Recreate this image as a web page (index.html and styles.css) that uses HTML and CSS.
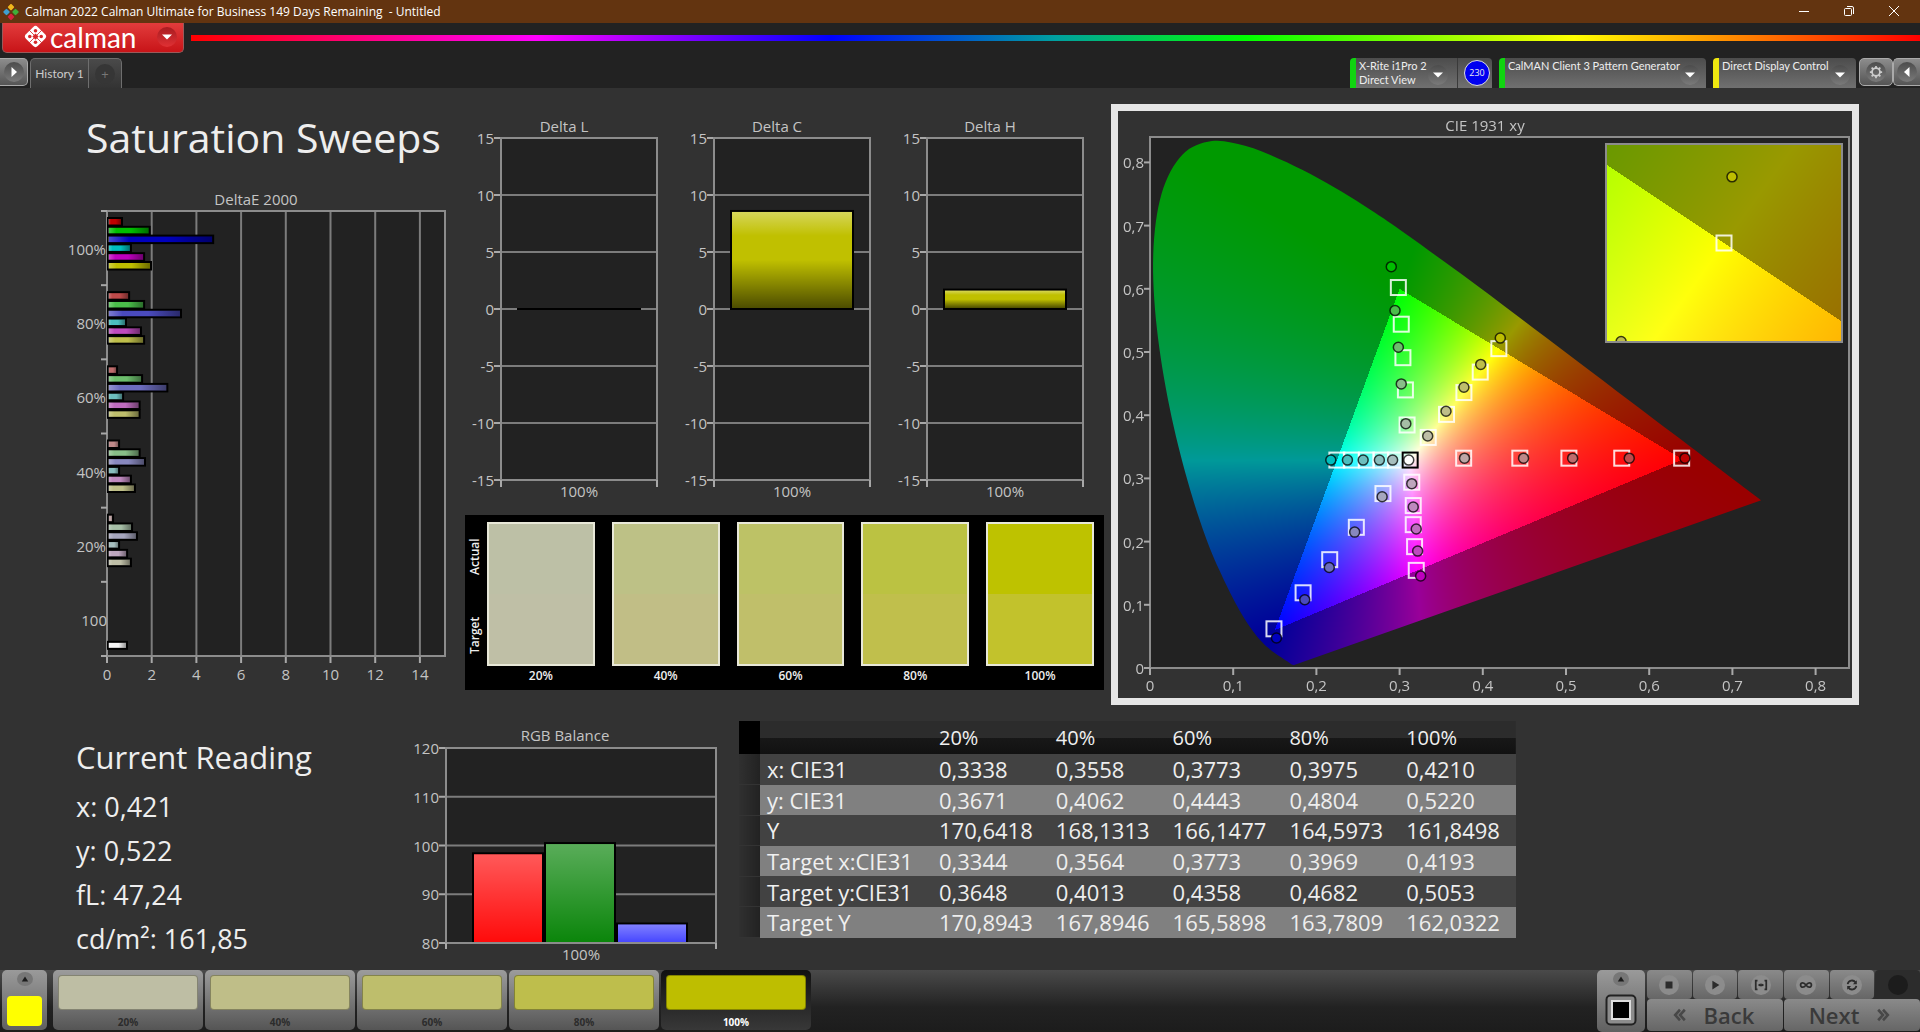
FILE: index.html
```html
<!DOCTYPE html>
<html lang="en">
<head>
  <meta charset="UTF-8" />
  <meta name="viewport" content="width=device-width, initial-scale=1.0" />
  <title>Calman - Saturation Sweeps</title>
  <link rel="stylesheet" href="styles.css">
</head>
<body>
  <!-- Window title -->
  <header class="titlebar">
    <svg class="app-icon" viewBox="0 0 16 16">
      <rect x="5.5" y="0.6" width="5" height="5" rx="1" transform="rotate(45 8 3.1)" fill="#f2b81c"/>
      <rect x="1" y="5.5" width="5" height="5" rx="1" transform="rotate(45 3.5 8)" fill="#3f9fd0"/>
      <rect x="10" y="5.5" width="5" height="5" rx="1" transform="rotate(45 12.5 8)" fill="#3fae3a"/>
      <rect x="5.5" y="10.4" width="5" height="5" rx="1" transform="rotate(45 8 12.9)" fill="#d8203f"/>
    </svg>
    <span class="window-title">Calman 2022 Calman Ultimate for Business 149 Days Remaining&nbsp; - Untitled</span>
    <div class="window-buttons">
      <button aria-label="Minimize"><svg viewBox="0 0 12 12"><path d="M1 6.5h10"/></svg></button>
      <button aria-label="Restore"><svg viewBox="0 0 12 12"><rect x="1.5" y="3.5" width="7" height="7" rx="1"/><path d="M4 1.5h5a1.500 1.500 0 0 1 1.500 1.500v6"/></svg></button>
      <button aria-label="Close"><svg viewBox="0 0 12 12"><path d="M1 1l10 10M11 1L1 11"/></svg></button>
    </div>
  </header>

  <!-- Logo menu and spectrum -->
  <div class="brandbar">
    <button class="brand">
      <svg class="brand-logo" viewBox="0 0 24 24">
        <rect x="4" y="4" width="16" height="16" rx="3" transform="rotate(45 12 12)" fill="#fff"/>
        <g fill="#d8282a">
          <circle cx="12" cy="6.500" r="1.700"/><circle cx="6.500" cy="12" r="1.700"/><circle cx="17.500" cy="12" r="1.700"/><circle cx="12" cy="17.500" r="1.700"/>
          <path d="M12 9l3 3-3 3-3-3z"/>
        </g>
        <g stroke="#d8282a" stroke-width="0.8"><path d="M6 6l12 12M18 6L6 18"/></g>
      </svg>
      <span class="brand-name">calman</span>
      <span class="knob red"><svg viewBox="0 0 10 10"><path d="M0 2.500h10L5 7.500z"/></svg></span>
    </button>
    <div class="spectrum"></div>
  </div>

  <!-- Tabs and devices -->
  <div class="tabbar">
    <button class="square-btn first" aria-label="Expand"><span class="knob"><svg viewBox="0 0 10 10"><path d="M2.500 0v10L8 5z"/></svg></span></button>
    <div class="tabs">
      <button class="tab">History 1</button>
      <button class="tab-add" aria-label="Add tab"><span class="plus">+</span></button>
    </div>
    <div class="devices">
      <div class="device meter">
        <button class="device-main"><span>X-Rite i1Pro 2<br>Direct View</span><span class="knob"><svg viewBox="0 0 10 10"><path d="M0 2.500h10L5 7.500z"/></svg></span></button>
        <div class="device-badge"><span>230</span></div>
      </div>
      <div class="device generator">
        <button class="device-main"><span>CalMAN Client 3 Pattern Generator</span><span class="knob"><svg viewBox="0 0 10 10"><path d="M0 2.500h10L5 7.500z"/></svg></span></button>
      </div>
      <div class="device display">
        <button class="device-main"><span>Direct Display Control</span><span class="knob"><svg viewBox="0 0 10 10"><path d="M0 2.500h10L5 7.500z"/></svg></span></button>
      </div>
      <div class="device-tools">
        <button class="square-btn" aria-label="Settings"><span class="knob"><svg class="gear" viewBox="0 0 16 16"><circle cx="8" cy="8" r="4.500"/><path d="M8 1v2.500M8 12.500V15M1 8h2.500M12.500 8H15M3 3l1.800 1.800M11.200 11.200L13 13M13 3l-1.800 1.800M4.800 11.200L3 13"/></svg></span></button>
        <button class="square-btn last" aria-label="Collapse"><span class="knob"><svg viewBox="0 0 10 10"><path d="M7.500 0v10L2 5z"/></svg></span></button>
      </div>
    </div>
  </div>

  <main>
    <section class="charts">
      <div class="sweeps">
        <h1>Saturation Sweeps</h1>
        <svg id="deltae" class="chart" viewBox="0 0 404 502"></svg>
      </div>

      <div class="middle">
        <div class="deltas">
          <svg id="delta-l" class="chart" viewBox="0 0 213 406"></svg>
          <svg id="delta-c" class="chart" viewBox="0 0 213 406"></svg>
          <svg id="delta-h" class="chart" viewBox="0 0 213 406"></svg>
        </div>
        <div class="compare">
          <div class="compare-side"><span>Actual</span><span>Target</span></div>
          <div class="compare-list" id="compare"></div>
        </div>
      </div>

      <div class="cie">
        <canvas id="cie-field" width="734" height="587"></canvas>
        <svg id="cie" class="chart" viewBox="0 0 734 587"></svg>
      </div>
    </section>

    <section class="readings">
      <div class="current">
        <h2>Current Reading</h2>
        <p>x: 0,421</p>
        <p>y: 0,522</p>
        <p>fL: 47,24</p>
        <p>cd/m²: 161,85</p>
      </div>
      <svg id="rgb" class="chart" viewBox="0 0 334 244"></svg>
      <table class="data">
        <colgroup><col class="col-mark"><col class="col-name"><col><col><col><col><col></colgroup>
        <thead>
          <tr><td></td><td></td><th>20%</th><th>40%</th><th>60%</th><th>80%</th><th>100%</th></tr>
        </thead>
        <tbody>
          <tr><td></td><th>x: CIE31</th><td>0,3338</td><td>0,3558</td><td>0,3773</td><td>0,3975</td><td>0,4210</td></tr>
          <tr><td></td><th>y: CIE31</th><td>0,3671</td><td>0,4062</td><td>0,4443</td><td>0,4804</td><td>0,5220</td></tr>
          <tr><td></td><th>Y</th><td>170,6418</td><td>168,1313</td><td>166,1477</td><td>164,5973</td><td>161,8498</td></tr>
          <tr><td></td><th>Target x:CIE31</th><td>0,3344</td><td>0,3564</td><td>0,3773</td><td>0,3969</td><td>0,4193</td></tr>
          <tr><td></td><th>Target y:CIE31</th><td>0,3648</td><td>0,4013</td><td>0,4358</td><td>0,4682</td><td>0,5053</td></tr>
          <tr><td></td><th>Target Y</th><td>170,8943</td><td>167,8946</td><td>165,5898</td><td>163,7809</td><td>162,0322</td></tr>
        </tbody>
      </table>
    </section>
  </main>

  <!-- Pattern bar -->
  <footer class="bottombar">
    <button class="current-color" aria-label="Pattern color">
      <span class="mini-knob"><svg viewBox="0 0 10 10"><path d="M1 8h8L5 2z"/></svg></span>
      <span class="color-box"></span>
    </button>
    <div class="patterns" id="patterns"></div>
    <div class="transport">
      <button class="stop-panel" aria-label="Window">
        <span class="mini-knob"><svg viewBox="0 0 10 10"><path d="M1 8h8L5 2z"/></svg></span>
        <svg class="stop-box" viewBox="0 0 32 32"><rect x="1.500" y="1.500" width="29" height="29" rx="4" fill="#8c8c8c" stroke="#222" stroke-width="2"/><rect x="7" y="7" width="18" height="18" fill="#000" stroke="#ddd" stroke-width="2"/><rect x="10" y="10" width="12" height="12" fill="#000"/></svg>
      </button>
      <div class="transport-grid">
        <div class="transport-row">
          <button aria-label="Stop"><span class="round"><svg viewBox="0 0 16 16"><rect x="4" y="4" width="8" height="8"/></svg></span></button>
          <button aria-label="Play"><span class="round"><svg viewBox="0 0 16 16"><path d="M5 3l8 5-8 5z"/></svg></span></button>
          <button aria-label="Read series"><span class="round"><svg viewBox="0 0 16 16"><path class="line" d="M4 3H2v10h2M12 3h2v10h-2M5.500 8h5"/><path d="M4.500 8l3-2v4zM11.500 8l-3-2v4z"/></svg></span></button>
          <button aria-label="Read continuous"><span class="round"><svg viewBox="0 0 16 16"><path class="line" d="M8 8C6.500 6 5.500 5.500 4.300 5.500a2.500 2.500 0 0 0 0 5C5.500 10.500 6.500 10 8 8s2.500-2.500 3.700-2.500a2.500 2.500 0 0 1 0 5C10.500 10.500 9.500 10 8 8z"/></svg></span></button>
          <button aria-label="Refresh"><span class="round"><svg viewBox="0 0 16 16"><path class="line" d="M3 7a5 5 0 0 1 9-2M13 9a5 5 0 0 1-9 2"/><path d="M13.500 2.500v4.500H9zM2.500 13.500V9H7z"/></svg></span></button>
          <button class="dark" aria-label="Record"><span class="round"></span></button>
        </div>
        <div class="transport-row">
          <button class="nav"><svg viewBox="0 0 16 16"><path d="M8 2L2.500 8 8 14M13.500 2L8 8l5.500 6"/></svg>Back</button>
          <button class="nav">Next<svg viewBox="0 0 16 16"><path d="M8 2l5.500 6L8 14M2.500 2L8 8l-5.500 6"/></svg></button>
        </div>
      </div>
    </div>
  </footer>

  <script src="charts.js"></script>
</body>
</html>
```
FILE: styles.css
```css
* {
  box-sizing: border-box;
}
body {
  margin: 0;
  min-height: 100vh;
  display: flex;
  flex-direction: column;
  background: #323232;
  color: #eee;
  font-family: "Open Sans", "Noto Sans", sans-serif;
  font-size: 15px;
}
button {
  border: 0;
  padding: 0;
  background: none;
  color: inherit;
  font-family: inherit;
}

/* Title bar */
.titlebar {
  display: flex;
  align-items: center;
  height: 23px;
  padding: 0 4px 0 3px;
  background: #633410;
  font-size: 12px;
}
.app-icon {
  width: 16px;
  height: 16px;
  margin-right: 6px;
}
.window-title {
  flex: 1;
  color: #fff;
}
.window-buttons {
  display: flex;
}
.window-buttons button {
  width: 45px;
  height: 22px;
}
.window-buttons svg {
  width: 12px;
  height: 12px;
  fill: none;
  stroke: #fff;
}

/* Logo and spectrum */
.brandbar {
  display: flex;
  align-items: flex-start;
  height: 35px;
  padding-left: 2px;
  background: #222;
}
.brand {
  display: flex;
  align-items: center;
  width: 182px;
  height: 30px;
  padding: 0 6px 2px 20px;
  border: 1px solid #9a5a5a;
  border-top: 0;
  border-radius: 0 0 5px 5px;
  background: linear-gradient(#e23c3c, #c81418);
  color: #fff;
}
.brand-logo {
  width: 25px;
  height: 25px;
}
.brand-name {
  flex: 1;
  margin-left: 2px;
  font-family: Lato, sans-serif;
  font-size: 28px;
  line-height: 24px;
  text-align: left;
}
.spectrum {
  flex: 1;
  height: 6px;
  margin: 12px 0 0 7px;
  background: linear-gradient(to right, #f00, #f0f 20%, #00f 37%, #00a0a0 50%, #0f0 61%, #ff0 80%, #f00);
}
.knob {
  display: flex;
  align-items: center;
  justify-content: center;
  width: 20px;
  height: 20px;
  border-radius: 50%;
  background: linear-gradient(#4c4c4c, #7a7a7a);
}
.knob.red {
  background: linear-gradient(#a81c20, #e03034);
}
.knob svg {
  width: 10px;
  height: 10px;
  fill: #fff;
}
.knob .gear {
  width: 14px;
  height: 14px;
  fill: none;
  stroke: #ccc;
  stroke-width: 2;
}

/* Tabs and devices */
.tabbar {
  display: flex;
  height: 30px;
  background: #222;
}
.square-btn {
  display: flex;
  align-items: center;
  justify-content: center;
  width: 34px;
  height: 28px;
  border: 1px solid #aaa;
  border-radius: 5px;
  background: linear-gradient(#8c8c8c, #555);
}
.square-btn.first {
  width: 28px;
  border-left: 0;
  border-radius: 0 5px 5px 0;
}
.square-btn.last {
  width: 27px;
  border-right: 0;
  border-radius: 5px 0 0 5px;
}
.tabs {
  display: flex;
  margin-left: 2px;
  border: 1px solid #6e6e6e;
  border-bottom: 0;
  border-radius: 5px 5px 0 0;
  background: linear-gradient(#4a4a4a, #333);
}
.tab {
  width: 58px;
  border-right: 1px solid #6e6e6e;
  color: #ccc;
  font-size: 12px;
  font-family: Lato, sans-serif;
}
.tab-add {
  display: flex;
  align-items: center;
  justify-content: center;
  width: 32px;
}
.plus {
  width: 20px;
  height: 20px;
  border-radius: 50%;
  background: #363636;
  color: #777;
  font-size: 13px;
  line-height: 20px;
}
.devices {
  display: flex;
  gap: 7px;
  margin-left: auto;
}
.device {
  display: flex;
  border-left: 6px solid #10d410;
  border-radius: 4px 4px 0 0;
  background: linear-gradient(#4c4c4c, #707070);
}
.device.display {
  border-left-color: #f0e810;
}
.device-main {
  display: flex;
  flex: 1;
  align-items: flex-start;
  justify-content: space-between;
  padding: 1px 6px 0 3px;
  font-family: Lato, sans-serif;
  font-size: 11px;
  line-height: 14px;
  text-align: left;
}
.device-main .knob {
  margin-top: 6px;
}
.meter {
  width: 142px;
}
.meter .device-main {
  padding-right: 9px;
}
.generator {
  width: 207px;
}
.display {
  width: 143px;
}
.device-badge {
  width: 35px;
  padding: 2px 0 0 6px;
  border-left: 1px solid #3a3a3a;
}
.device-badge span {
  display: block;
  width: 26px;
  height: 26px;
  border: 1px solid #ddd;
  border-radius: 50%;
  background: #0000f0;
  font-size: 9px;
  line-height: 24px;
  text-align: center;
}
.device-tools {
  display: flex;
  margin-left: -4px;
}

/* Charts */
main {
  flex: 1;
  padding: 16px 61px 0;
}
.charts {
  display: grid;
  grid-template-columns: 404fr 639fr 755fr;
  align-items: start;
}
.chart {
  display: block;
  width: 100%;
  height: auto;
}
.chart text {
  fill: #c4c4c4;
  font-size: 15px;
}
.chart .end {
  text-anchor: end;
}
.chart .mid {
  text-anchor: middle;
}
.chart .plot {
  fill: #222;
}
.chart .frame {
  fill: none;
  stroke: #8c8c8c;
  stroke-width: 2;
}
.chart .grid {
  stroke: #7c7c7c;
  stroke-width: 2;
}
.chart .tick {
  stroke: #a8a8a8;
  stroke-width: 2;
}
.chart .bar {
  stroke: #000;
  stroke-width: 2;
}
.sweeps h1 {
  margin: 0 0 16px 25px;
  font-size: 41px;
  font-weight: 400;
  line-height: 66px;
}
.deltas {
  display: grid;
  grid-template-columns: 1fr 1fr 1fr;
}
.compare {
  display: flex;
  margin-top: 5px;
  padding: 7px 10px 4px 0;
  background: #000;
}
.compare-side {
  display: flex;
  flex-direction: column;
  gap: 8px;
  width: 22px;
  height: 148px;
}
.compare-side span {
  flex: 1;
  font-size: 12px;
  font-weight: 600;
  line-height: 20px;
  text-align: center;
  writing-mode: vertical-rl;
  transform: rotate(180deg);
}
.compare-list {
  display: flex;
  flex: 1;
  gap: 17px;
}
.compare-item {
  flex: 1;
  font-size: 12px;
  font-weight: 600;
  line-height: 20px;
  text-align: center;
}
.compare-swatch {
  height: 144px;
  border: 2px solid #e8e8d8;
}
.compare-half {
  height: 50%;
}
.cie {
  display: grid;
  margin-left: 7px;
  border: 7px solid #e6e6e6;
}
.cie > * {
  grid-area: 1 / 1;
  width: 100%;
}
.cie circle {
  stroke: #000;
  stroke-opacity: 0.75;
  stroke-width: 1.5;
}
.cie .target {
  fill: none;
  stroke: #fff;
  stroke-opacity: 0.85;
  stroke-width: 2;
}
.cie .white {
  stroke: #000;
  stroke-opacity: 1;
}

/* Readings */
.readings {
  display: grid;
  grid-template-columns: 344fr 334fr 777fr 343fr;
  align-items: start;
  margin-top: 16px;
}
.current {
  padding: 12px 0 0 15px;
}
.current h2 {
  margin: 0 0 4px;
  font-size: 31px;
  font-weight: 400;
  line-height: 48px;
}
.current p {
  margin: 0;
  font-size: 27px;
  line-height: 44px;
}
.data {
  width: 100%;
  height: 217px;
  border-collapse: collapse;
  table-layout: fixed;
  font-size: 22px;
  line-height: 28px;
}
.col-mark {
  width: 21px;
}
.col-name {
  width: 172px;
}
.data td,
.data th {
  padding: 0 0 0 7px;
  font-weight: 400;
  text-align: left;
  white-space: nowrap;
}
.data th {
  color: #f0f0f0;
}
.data thead tr {
  height: 33px;
  background: linear-gradient(#2c2c2c 50%, #181818 51%, #111);
  font-size: 20px;
}
.data tbody tr {
  background: #424242;
}
.data tbody tr:nth-child(even) {
  background: #808080;
}
.data thead td:first-child {
  background: #000;
}
.data tbody td:first-child {
  border-bottom: 1px solid #333;
  background: linear-gradient(to right, #303030, #222);
}

/* Bottom bar */
.bottombar {
  display: flex;
  height: 62px;
  padding-left: 2px;
  background: linear-gradient(#4a4a4a, #222 60%, #1c1c1c);
}
.current-color {
  display: flex;
  flex-direction: column;
  align-items: center;
  justify-content: space-between;
  width: 45px;
  height: 60px;
  padding: 2px 0 4px;
  border-radius: 5px;
  background: linear-gradient(#9a9a9a, #606060);
}
.mini-knob {
  display: flex;
  align-items: center;
  justify-content: center;
  width: 16px;
  height: 14px;
  border-radius: 50%;
  background: #777;
}
.mini-knob svg {
  width: 10px;
  height: 8px;
  fill: #1c1c1c;
}
.color-box {
  width: 35px;
  height: 30px;
  border-radius: 4px;
  background: #ff0;
}
.patterns {
  display: flex;
  gap: 2px;
  margin-left: 6px;
}
.pattern {
  display: flex;
  flex-direction: column;
  width: 150px;
  height: 60px;
  padding: 5px 5px 0;
  border-radius: 5px;
  background: linear-gradient(#9c9c9c, #555);
  color: #2c2c2c;
  font-size: 10px;
  font-weight: 700;
  line-height: 16px;
  text-align: center;
}
.pattern-swatch {
  height: 36px;
  margin-bottom: 4px;
  border: 1px solid rgba(0, 0, 0, 0.3);
  border-radius: 4px;
}
.pattern.selected {
  background: linear-gradient(#111, #383838);
  color: #fff;
}
.transport {
  display: flex;
  gap: 2px;
  margin-left: auto;
}
.stop-panel {
  display: flex;
  flex-direction: column;
  align-items: center;
  width: 48px;
  padding-top: 2px;
  border-radius: 5px;
  background: linear-gradient(#9a9a9a, #606060);
}
.stop-box {
  width: 32px;
  height: 32px;
  margin-top: 8px;
}
.transport-grid {
  width: 273px;
}
.transport-row {
  display: flex;
  gap: 1px;
}
.transport-row button {
  display: flex;
  flex: 1;
  align-items: center;
  justify-content: center;
  height: 29px;
  border-radius: 4px;
  background: linear-gradient(#8a8a8a, #666);
}
.transport-row .dark {
  background: #2c2c2c;
}
.round {
  width: 20px;
  height: 20px;
  border-radius: 50%;
  background: #8c8c8c;
}
.dark .round {
  background: #1c1c1c;
}
.round svg {
  display: block;
  width: 14px;
  height: 14px;
  margin: 3px;
  fill: #2c2c2c;
}
.round .line {
  fill: none;
  stroke: #2c2c2c;
  stroke-width: 2;
}
.transport-row .nav {
  gap: 16px;
  height: 32px;
  padding-right: 4px;
  color: #3a3a3a;
  font-size: 22px;
  font-weight: 600;
}
.nav svg {
  width: 16px;
  height: 14px;
  fill: none;
  stroke: #484848;
  stroke-width: 3;
}
```
FILE: charts.js
```js
var LEVELS = ['20%', '40%', '60%', '80%', '100%'];

// Low channel for each saturation level at 75% luminance
var LOW = [166, 136, 108, 74, 0];
var HIGH = 190;

function hueColor(hue, level) {
  var mask = { r: '100', g: '010', b: '001', c: '011', m: '101', y: '110' }[hue];
  return 'rgb(' + mask.split('').map(function(bit) {
    return bit === '1' ? HIGH : LOW[level];
  }).join(',') + ')';
}

// SVG helpers
function el(name, attrs, text) {
  var out = '<' + name;
  for (var key in attrs) out += ' ' + key + '="' + attrs[key] + '"';
  return out + '>' + (text === undefined ? '' : text) + '</' + name + '>';
}
function line(cls, x1, y1, x2, y2) {
  return el('line', { 'class': cls, x1: x1, y1: y1, x2: x2, y2: y2 });
}
function rect(cls, x, y, w, h, fill) {
  var attrs = { 'class': cls, x: x, y: y, width: w, height: h };
  if (fill) attrs.fill = fill;
  return el('rect', attrs);
}
function label(cls, x, y, text) {
  return el('text', { 'class': cls, x: x, y: y }, text);
}
function gradient(id, horizontal, stops) {
  return el('linearGradient', { id: id, x1: 0, y1: 0, x2: horizontal ? 1 : 0, y2: horizontal ? 0 : 1 },
    stops.map(function(s) {
      return el('stop', { offset: s[0], 'stop-color': s[1], 'stop-opacity': s[2] });
    }).join(''));
}
function put(id, html) {
  document.getElementById(id).innerHTML = html;
}

// DeltaE 2000, one group of six bars per level
function drawDeltaE() {
  var values = [
    [0.27, 1.12, 1.34, 0.54, 0.90, 1.07],
    [0.54, 1.46, 1.70, 0.54, 1.07, 1.25],
    [0.45, 1.57, 2.70, 0.72, 1.46, 1.46],
    [0.99, 1.66, 3.31, 0.85, 1.52, 1.66],
    [0.67, 1.91, 4.75, 1.07, 1.66, 1.97]
  ];
  var left = 46, top = 25, width = 338, height = 445, unit = 22.35, step = height / 6;
  var s = gradient('shade-h', true, [[0, '#fff', 0.3], [0.2, '#fff', 0], [0.55, '#000', 0], [1, '#000', 0.45]]);
  s += label('mid', 195, 19, 'DeltaE 2000');
  s += rect('plot', left, top, width, height);
  for (var v = 0; v <= 14; v += 2) {
    var x = left + v * unit;
    if (v) s += line('grid', x, top, x, top + height);
    s += line('tick', x, top + height, x, top + height + 7);
    s += label('mid', x, top + height + 24, v);
  }
  s += rect('frame', left, top, width, height);
  for (var i = 0; i <= 6; i++) s += line('tick', left - 6, top + i * step, left, top + i * step);
  for (var g = 0; g < 5; g++) {
    var y = top + g * step;
    var level = 4 - g;
    s += label('end', left - 1, y + step / 2 + 7, LEVELS[level]);
    'rgbcmy'.split('').forEach(function(hue, n) {
      var w = values[level][n] * unit - 1;
      s += rect('bar', left + 1, y + 7 + n * 8.8, w, 7.5, hueColor(hue, level));
      s += rect('', left + 1, y + 8 + n * 8.8, w, 5.5, 'url(#shade-h)');
    });
  }
  s += label('end', left, top + 5.5 * step + 7, '100');
  s += rect('bar', left + 1, top + 5 * step + 60, 19, 7, '#f4f4f4');
  s += rect('', left + 1, top + 5 * step + 61, 19, 5, 'url(#shade-h)');
  put('deltae', s);
}

// Delta L / C / H, range -15..15
function drawDelta(id, title, value) {
  var left = 36, top = 34, width = 156, height = 342, unit = height / 30, zero = top + height / 2;
  var s = gradient('shade-' + id, false, [[0, '#fff', 0.35], [0.25, '#fff', 0], [0.5, '#000', 0], [1, '#000', 0.6]]);
  s += label('mid', 99, 28, title);
  s += rect('plot', left, top, width, height);
  for (var v = -15; v <= 15; v += 5) {
    var y = zero - v * unit;
    s += line('grid', left, y, left + width, y);
    s += line('tick', left - 7, y, left, y);
    s += label('end', left - 7, y + 6, v);
  }
  s += rect('frame', left, top, width, height);
  s += line('tick', left, top + height, left, top + height + 7);
  s += line('tick', left + width, top + height, left + width, top + height + 7);
  if (value) {
    s += rect('bar', left + 17, zero - value * unit, 122, value * unit, '#c0c000');
    s += rect('', left + 18, zero - value * unit + 1, 120, value * unit - 2, 'url(#shade-' + id + ')');
  } else {
    s += line('bar', left + 16, zero, left + 140, zero);
  }
  s += label('mid', left + 78, top + height + 17, '100%');
  put(id, s);
}

// RGB balance, range 80..120
function drawRgb() {
  var left = 41, top = 27, width = 270, height = 195, unit = height / 40;
  var bars = [['#f00', 98.4], ['#008000', 100.5], ['#3c3cff', 84]];
  var s = gradient('shade-rgb', false, [[0, '#fff', 0.35], [1, '#fff', 0.04]]);
  s += label('mid', 160, 20, 'RGB Balance');
  s += rect('plot', left, top, width, height);
  for (var v = 80; v <= 120; v += 10) {
    var y = top + (120 - v) * unit;
    s += line('grid', left, y, left + width, y);
    s += line('tick', left - 7, y, left, y);
    s += label('end', left - 7, y + 6, v);
  }
  bars.forEach(function(bar, n) {
    var h = (bar[1] - 80) * unit;
    s += rect('bar', left + 27 + n * 72, top + height - h, 70, h, bar[0]);
    s += rect('', left + 28 + n * 72, top + height - h + 1, 68, h - 1, 'url(#shade-rgb)');
  });
  s += rect('frame', left, top, width, height);
  s += line('tick', left, top + height, left, top + height + 6);
  s += line('tick', left + width, top + height, left + width, top + height + 6);
  s += label('mid', left + 135, top + height + 17, '100%');
  put('rgb', s);
}

// Spectral locus of the CIE 1931 observer
var LOCUS = [
  [0.1741, 0.0050], [0.1733, 0.0048], [0.1714, 0.0051], [0.1689, 0.0069], [0.1644, 0.0109],
  [0.1566, 0.0177], [0.1440, 0.0297], [0.1355, 0.0399], [0.1241, 0.0578], [0.1096, 0.0868],
  [0.0913, 0.1327], [0.0687, 0.2007], [0.0454, 0.2950], [0.0235, 0.4127], [0.0082, 0.5384],
  [0.0039, 0.6548], [0.0139, 0.7502], [0.0389, 0.8120], [0.0743, 0.8338], [0.1142, 0.8262],
  [0.1547, 0.8059], [0.1929, 0.7816], [0.2296, 0.7543], [0.2658, 0.7243], [0.3016, 0.6923],
  [0.3731, 0.6245], [0.4441, 0.5547], [0.5125, 0.4866], [0.5752, 0.4242], [0.6270, 0.3725],
  [0.6658, 0.3340], [0.6915, 0.3083], [0.7190, 0.2809], [0.7347, 0.2653]
];

var PLOT = { left: 32, top: 26, right: 731, bottom: 557, ux: 832, uy: 632 };
var INSET = { left: 488, top: 33, width: 236, height: 198, cx: 0.4193, cy: 0.5053, span: 0.05 };

// Pairs of [target, actual] in xy
var POINTS = {
  r: [[[.377, .332], [.378, .332]], [[.4445, .332], [.449, .332]], [[.5035, .332], [.508, .332]], [[.567, .332], [.576, .332]], [[.639, .332], [.643, .332]]],
  g: [[[.309, .3845], [.3075, .3866]], [[.307, .44], [.302, .4495]], [[.304, .491], [.2985, .5075]], [[.302, .544], [.2945, .5655]], [[.2985, .602], [.29, .635]]],
  b: [[[.28, .276], [.279, .271]], [[.248, .2226], [.246, .215]], [[.216, .1714], [.2155, .159]], [[.184, .119], [.186, .108]], [[.149, .062], [.152, .0475]]],
  c: [[[.295, .329], [.2916, .329]], [[.2775, .329], [.2757, .329]], [[.26, .329], [.2562, .329]], [[.242, .329], [.2373, .329]], [[.2246, .329], [.2173, .329]]],
  m: [[[.3146, .294], [.3146, .2917]], [[.3164, .257], [.3164, .2547]], [[.3164, .2268], [.32, .22]], [[.318, .192], [.3217, .185]], [[.32, .1545], [.3253, .1456]]],
  y: [[[.3344, .3648], [.3338, .3671]], [[.3564, .4013], [.3558, .4062]], [[.3773, .4358], [.3773, .4443]], [[.3969, .4682], [.3975, .4804]], [[.4193, .5053], [.421, .522]]]
};

// Full brightness inside the Rec.709 triangle, 60% outside
function xyColor(x, y) {
  var X = x / y, Z = (1 - x - y) / y;
  var rgb = [
    3.2406 * X - 1.5372 - 0.4986 * Z,
    -0.9689 * X + 1.8758 + 0.0415 * Z,
    0.0557 * X - 0.2040 + 1.0570 * Z
  ];
  var inside = Math.min(rgb[0], rgb[1], rgb[2]) >= 0;
  var max = Math.max(rgb[0], rgb[1], rgb[2]);
  return rgb.map(function(c) {
    return Math.max(c, 0) / max * (inside ? 255 : 153);
  });
}

// Fill a rectangle with color, toXY maps a pixel to chromaticity
function colorField(w, h, toXY) {
  var off = document.createElement('canvas');
  off.width = w;
  off.height = h;
  var ctx = off.getContext('2d');
  var img = ctx.createImageData(w, h);
  for (var j = 0; j < h; j++) {
    for (var i = 0; i < w; i++) {
      var p = toXY(i + 0.5, j + 0.5);
      var c = xyColor(p[0], Math.max(p[1], 0.0001));
      var o = (j * w + i) * 4;
      img.data[o] = c[0];
      img.data[o + 1] = c[1];
      img.data[o + 2] = c[2];
      img.data[o + 3] = 255;
    }
  }
  ctx.putImageData(img, 0, 0);
  return off;
}

function plotX(x) { return PLOT.left + x * PLOT.ux; }
function plotY(y) { return PLOT.bottom - y * PLOT.uy; }
function insetX(x) { return INSET.left + ((x - INSET.cx) / INSET.span + 0.5) * INSET.width; }
function insetY(y) { return INSET.top + (0.5 - (y - INSET.cy) / INSET.span) * INSET.height; }

function drawField() {
  var canvas = document.getElementById('cie-field');
  var ctx = canvas.getContext('2d');
  ctx.fillStyle = '#222';
  ctx.fillRect(PLOT.left, PLOT.top, PLOT.right - PLOT.left, PLOT.bottom - PLOT.top);

  ctx.save();
  ctx.beginPath();
  ctx.moveTo(plotX(LOCUS[0][0]), plotY(LOCUS[0][1]));
  for (var i = 0; i < LOCUS.length - 1; i++) {
    var p0 = LOCUS[Math.max(i - 1, 0)], p1 = LOCUS[i], p2 = LOCUS[i + 1];
    var p3 = LOCUS[Math.min(i + 2, LOCUS.length - 1)];
    ctx.bezierCurveTo(
      plotX(p1[0] + (p2[0] - p0[0]) / 6), plotY(p1[1] + (p2[1] - p0[1]) / 6),
      plotX(p2[0] - (p3[0] - p1[0]) / 6), plotY(p2[1] - (p3[1] - p1[1]) / 6),
      plotX(p2[0]), plotY(p2[1]));
  }
  ctx.closePath();
  ctx.clip();
  ctx.drawImage(colorField(canvas.width, canvas.height, function(px, py) {
    return [(px - PLOT.left) / PLOT.ux, (PLOT.bottom - py) / PLOT.uy];
  }), 0, 0);
  ctx.restore();

  ctx.drawImage(colorField(INSET.width, INSET.height, function(px, py) {
    return [
      INSET.cx + (px / INSET.width - 0.5) * INSET.span,
      INSET.cy + (0.5 - py / INSET.height) * INSET.span
    ];
  }), INSET.left, INSET.top);
}

function square(cls, x, y) {
  return rect(cls, x - 7.5, y - 7.5, 15, 15);
}
function dot(x, y, fill) {
  return el('circle', { cx: x, cy: y, r: 5, fill: fill });
}

function drawCie() {
  var s = label('mid', 367, 20, 'CIE 1931 xy');
  s += rect('frame', PLOT.left, PLOT.top, PLOT.right - PLOT.left, PLOT.bottom - PLOT.top);
  for (var v = 0; v <= 8; v++) {
    var text = v ? '0,' + v : '0';
    var x = plotX(v / 10), y = plotY(v / 10);
    s += line('tick', x, PLOT.bottom, x, PLOT.bottom + 7);
    s += line('tick', PLOT.left - 6, y, PLOT.left, y);
    s += label('mid', x, PLOT.bottom + 23, text);
    s += label('end', PLOT.left - 6, y + 6, text);
  }
  var hues = Object.keys(POINTS);
  hues.forEach(function(hue) {
    POINTS[hue].forEach(function(pair) {
      s += square('target', plotX(pair[0][0]), plotY(pair[0][1]));
    });
  });
  s += square('target white', plotX(0.3127), plotY(0.329));
  hues.forEach(function(hue) {
    POINTS[hue].forEach(function(pair, level) {
      s += dot(plotX(pair[1][0]), plotY(pair[1][1]), hueColor(hue, level));
    });
  });
  s += dot(plotX(0.311), plotY(0.329), '#fff');

  // Zoom on the selected patch
  s += el('clipPath', { id: 'inset-clip' }, rect('', INSET.left, INSET.top, INSET.width, INSET.height));
  s += el('g', { 'clip-path': 'url(#inset-clip)' },
    dot(insetX(0.3975), insetY(0.4804), hueColor('y', 3)) +
    square('target', insetX(0.4193), insetY(0.5053)) +
    dot(insetX(0.421), insetY(0.522), hueColor('y', 4)));
  s += rect('frame', INSET.left, INSET.top, INSET.width, INSET.height);
  put('cie', s);
}

// Actual / target swatches and the pattern buttons
function drawSwatches() {
  var actual = ['#bdc0a6', '#bdc186', '#bdc266', '#bbc242', '#bec200'];
  var target = ['#bfbfa6', '#c1be86', '#c0bf6a', '#c0bf4c', '#c2c22c'];
  var pattern = ['#bebea4', '#bfbe88', '#bebe6c', '#bebe4c', '#bebe00'];
  put('compare', LEVELS.map(function(level, n) {
    return '<div class="compare-item"><div class="compare-swatch">' +
      '<div class="compare-half" style="background:' + actual[n] + '"></div>' +
      '<div class="compare-half" style="background:' + target[n] + '"></div>' +
      '</div>' + level + '</div>';
  }).join(''));
  put('patterns', LEVELS.map(function(level, n) {
    return '<button class="pattern' + (n === 4 ? ' selected' : '') + '">' +
      '<span class="pattern-swatch" style="background:' + pattern[n] + '"></span>' + level + '</button>';
  }).join(''));
}

drawDeltaE();
drawDelta('delta-l', 'Delta L', 0);
drawDelta('delta-c', 'Delta C', 8.6);
drawDelta('delta-h', 'Delta H', 1.7);
drawRgb();
drawField();
drawCie();
drawSwatches();
```
